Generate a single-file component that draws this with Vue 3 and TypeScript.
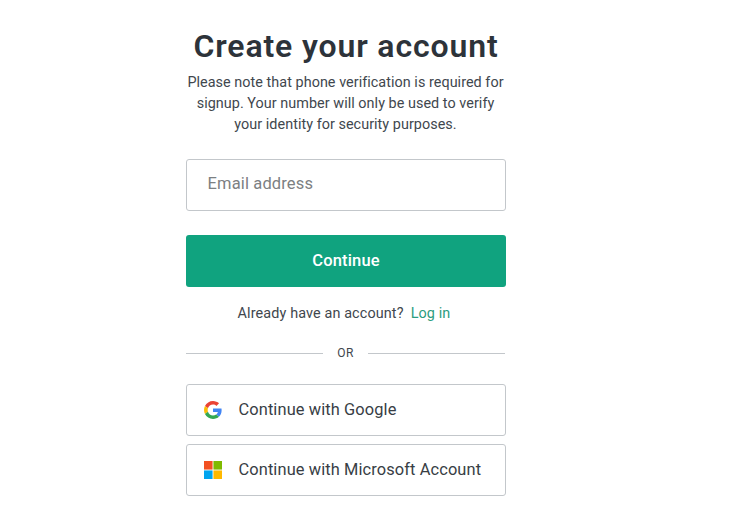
<script setup lang="ts">
import { ref } from 'vue'

const email = ref<string>('')
const note: string[] = [
  'Please note that phone verification is required for',
  'signup. Your number will only be used to verify',
  'your identity for security purposes.',
]
</script>

<template>
  <main class="page">
    <section class="panel">
      <h1>Create your account</h1>
      <p class="note">
        <span v-for="line in note" :key="line">{{ line }}</span>
      </p>
      <form @submit.prevent>
        <input v-model="email" class="email" type="email" placeholder="Email address" aria-label="Email address" />
        <button class="primary" type="submit">Continue</button>
      </form>
      <p class="login"><span>Already have an account?</span><a href="#">Log in</a></p>
      <div class="divider"><span>OR</span></div>
      <div class="providers">
        <button class="provider" type="button">
          <svg viewBox="0 0 48 48" aria-hidden="true">
            <path fill="#EA4335" d="M24 9.5c3.54 0 6.71 1.22 9.21 3.6l6.85-6.85C35.9 2.38 30.47 0 24 0 14.62 0 6.51 5.38 2.56 13.22l7.98 6.19C12.43 13.72 17.74 9.5 24 9.5z" />
            <path fill="#4285F4" d="M46.98 24.55c0-1.57-.15-3.09-.38-4.55H24v9.02h12.94c-.58 2.96-2.26 5.48-4.78 7.18l7.73 6c4.51-4.18 7.09-10.36 7.09-17.65z" />
            <path fill="#FBBC05" d="M10.53 28.59c-.48-1.45-.76-2.99-.76-4.59s.27-3.14.76-4.59l-7.98-6.19C.92 16.46 0 20.12 0 24c0 3.88.92 7.54 2.56 10.78l7.97-6.19z" />
            <path fill="#34A853" d="M24 48c6.48 0 11.93-2.13 15.89-5.81l-7.73-6c-2.15 1.45-4.92 2.3-8.16 2.3-6.26 0-11.57-4.22-13.47-9.91l-7.98 6.19C6.51 42.62 14.62 48 24 48z" />
          </svg>
          <span>Continue with Google</span>
        </button>
        <button class="provider" type="button">
          <svg viewBox="0 0 21 21" aria-hidden="true">
            <path fill="#F25022" d="M0 0h10v10H0z" />
            <path fill="#7FBA00" d="M11 0h10v10H11z" />
            <path fill="#00A4EF" d="M0 11h10v10H0z" />
            <path fill="#FFB900" d="M11 11h10v10H11z" />
          </svg>
          <span>Continue with Microsoft Account</span>
        </button>
      </div>
    </section>
  </main>
</template>

<style>
body {
  margin: 0;
  background: #fff;
}
</style>

<style scoped>
.page {
  box-sizing: border-box;
  height: 525px;
  padding: 26px 0 0 186px;
  overflow: hidden;
  color: #2d333a;
  font-family: Roboto, "Liberation Sans", sans-serif;
}
.panel {
  width: 320px;
}
h1 {
  margin: 0;
  font-size: 32px;
  font-weight: 600;
  line-height: 40px;
  letter-spacing: 0.86px;
  text-align: center;
  white-space: nowrap;
}
.note {
  display: flex;
  flex-direction: column;
  align-items: center;
  width: 319px;
  margin: 6px 0 0;
  color: #41474e;
  font-size: 14.4px;
  line-height: 21px;
  letter-spacing: 0.04px;
  white-space: nowrap;
}
form {
  display: flex;
  flex-direction: column;
  gap: 24px;
  margin-top: 24px;
}
.email {
  box-sizing: border-box;
  width: 320px;
  height: 52px;
  padding: 0 20px 3px 20.5px;
  border: 1px solid #c3c7cb;
  border-radius: 3px;
  outline: none;
  background: #fff;
  color: #2d333a;
  font: 16.5px Roboto, "Liberation Sans", sans-serif;
  letter-spacing: 0.14px;
}
.email::placeholder {
  color: #7c8082;
  opacity: 1;
}
.primary {
  height: 52px;
  padding: 0;
  border: 0;
  border-radius: 3px;
  background: #10a37f;
  color: #fff;
  font: 500 16.5px/50px Roboto, "Liberation Sans", sans-serif;
  letter-spacing: 0.15px;
}
.login {
  display: flex;
  justify-content: center;
  gap: 7px;
  width: 316px;
  margin: 16px 0 0;
  color: #41474e;
  font-size: 14.4px;
  line-height: 21px;
  letter-spacing: 0.12px;
}
.login a {
  color: #2b9c80;
  text-decoration: none;
}
.divider {
  display: flex;
  align-items: center;
  width: 319px;
  height: 18px;
  margin-top: 20px;
  color: #41474e;
  font-size: 12px;
  letter-spacing: 0.3px;
}
.divider::before,
.divider::after {
  flex: 1;
  height: 1px;
  background: #c3c7cb;
  content: "";
}
.divider span {
  width: 45px;
  text-align: center;
}
.providers {
  display: flex;
  flex-direction: column;
  gap: 8px;
  margin-top: 22px;
}
.provider {
  display: flex;
  align-items: center;
  box-sizing: border-box;
  height: 52px;
  padding: 0 17px;
  border: 1px solid #c3c7cb;
  border-radius: 3px;
  background: #fff;
  color: #383e45;
  font: 16.4px/22px Roboto, "Liberation Sans", sans-serif;
  letter-spacing: 0.11px;
  white-space: nowrap;
}
.provider svg {
  width: 18px;
  height: 18px;
  margin-right: 16.5px;
}
</style>
